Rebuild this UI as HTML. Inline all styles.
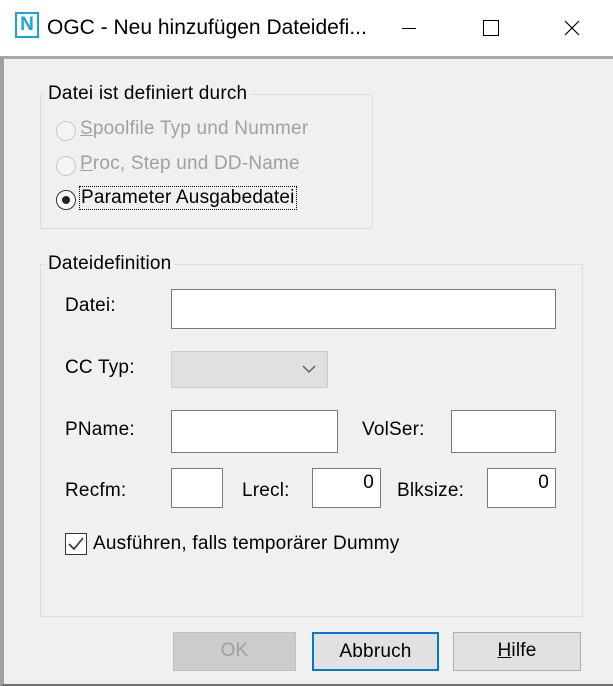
<!DOCTYPE html><html><head><style>
body{margin:0;width:613px;height:684px;overflow:hidden;background:#f0f0f0;font-family:"Liberation Sans",sans-serif;font-size:19px;color:#000;position:relative;letter-spacing:0.2px}
.a{position:absolute;white-space:nowrap}
.title{left:0;top:0;width:613px;height:56px;background:#fff}
.win{left:0;top:56px;width:609px;height:625px;border:2px solid #6e6e6e;border-top:3px solid #a8a8a8;border-left:4px solid #a0a0a0}
.grp{border:1px solid #dcdcdc}
.lg{background:#f0f0f0;padding:0 3px}
.in{background:#fff;border:1px solid #7a7a7a;box-sizing:border-box}
.btn{box-sizing:border-box;border:1px solid #adadad;background:#e1e1e1;text-align:center;line-height:36px}
.dis{color:#a0a0a0}
.rad{width:20px;height:20px;border-radius:50%;border:1px solid #c8c8c8;background:#f4f4f4;box-sizing:border-box}
</style></head><body>
<div class="a title"></div>
<div class="a" style="left:15px;top:12px;width:24px;height:26px;border:2px solid #1ba1e2;box-sizing:border-box;color:#1ba1e2;font-weight:bold;font-size:19px;text-align:center;line-height:22px;letter-spacing:0">N</div>
<div class="a" style="left:47px;top:16px;font-size:21px;letter-spacing:0">OGC - Neu hinzufügen Dateidefi...</div>
<div class="a" style="left:402px;top:28px;width:14px;border-top:1px solid #000"></div>
<div class="a" style="left:483px;top:20px;width:14px;height:14px;border:1px solid #000"></div>
<svg class="a" style="left:564px;top:20px" width="16" height="16"><path d="M1 1L15 15M15 1L1 15" stroke="#000" stroke-width="1.2"/></svg>
<div class="a win"></div>

<div class="a grp" style="left:40px;top:94px;width:331px;height:133px"></div>
<div class="a lg" style="left:45px;top:83px">Datei ist definiert durch</div>
<div class="a rad" style="left:56px;top:121px"></div><div class="a dis" style="left:80px;top:118px"><u>S</u>poolfile Typ und Nummer</div>
<div class="a rad" style="left:56px;top:156px"></div><div class="a dis" style="left:80px;top:153px"><u>P</u>roc, Step und DD-Name</div>
<div class="a rad" style="left:56px;top:190px;border:1px solid #333;background:#fff"></div><div class="a" style="left:62px;top:196px;width:8px;height:8px;border-radius:50%;background:#222"></div>
<div class="a" style="left:79px;top:186px;border:1px dotted #000;padding:0 1px">Parameter Ausgabedatei</div>

<div class="a grp" style="left:40px;top:264px;width:541px;height:351px"></div>
<div class="a lg" style="left:45px;top:253px">Dateidefinition</div>
<div class="a" style="left:65px;top:295px">Datei:</div>
<div class="a in" style="left:171px;top:289px;width:385px;height:40px"></div>
<div class="a" style="left:65px;top:357px">CC Typ:</div>
<div class="a" style="left:171px;top:351px;width:157px;height:37px;background:#e0e0e0;border:1px solid #ccc;box-sizing:border-box"></div>
<svg class="a" style="left:302px;top:365px" width="14" height="9"><path d="M1 1L7 7L13 1" stroke="#555" fill="none" stroke-width="1.3"/></svg>
<div class="a" style="left:65px;top:419px">PName:</div>
<div class="a in" style="left:171px;top:410px;width:167px;height:43px"></div>
<div class="a" style="left:362px;top:419px">VolSer:</div>
<div class="a in" style="left:451px;top:410px;width:105px;height:43px"></div>
<div class="a" style="left:65px;top:480px">Recfm:</div>
<div class="a in" style="left:171px;top:468px;width:52px;height:40px"></div>
<div class="a" style="left:242px;top:480px">Lrecl:</div>
<div class="a in" style="left:312px;top:468px;width:69px;height:40px;text-align:right;padding:3px 6px">0</div>
<div class="a" style="left:397px;top:480px">Blksize:</div>
<div class="a in" style="left:487px;top:468px;width:69px;height:40px;text-align:right;padding:3px 6px">0</div>
<div class="a" style="left:65px;top:533px;width:22px;height:22px;border:1px solid #333;background:#fff;box-sizing:border-box"></div>
<svg class="a" style="left:66px;top:534px" width="20" height="20"><path d="M3 10L8 15L17 4" stroke="#333" fill="none" stroke-width="1.6"/></svg>
<div class="a" style="left:93px;top:533px">Ausführen, falls temporärer Dummy</div>

<div class="a btn dis" style="left:173px;top:632px;width:123px;height:39px;background:#cccccc;border-color:#bfbfbf">OK</div>
<div class="a btn" style="left:312px;top:632px;width:127px;height:39px;border:2px solid #0078d7;line-height:35px">Abbruch</div>
<div class="a btn" style="left:453px;top:632px;width:128px;height:39px"><u>H</u>ilfe</div>
</body></html>
